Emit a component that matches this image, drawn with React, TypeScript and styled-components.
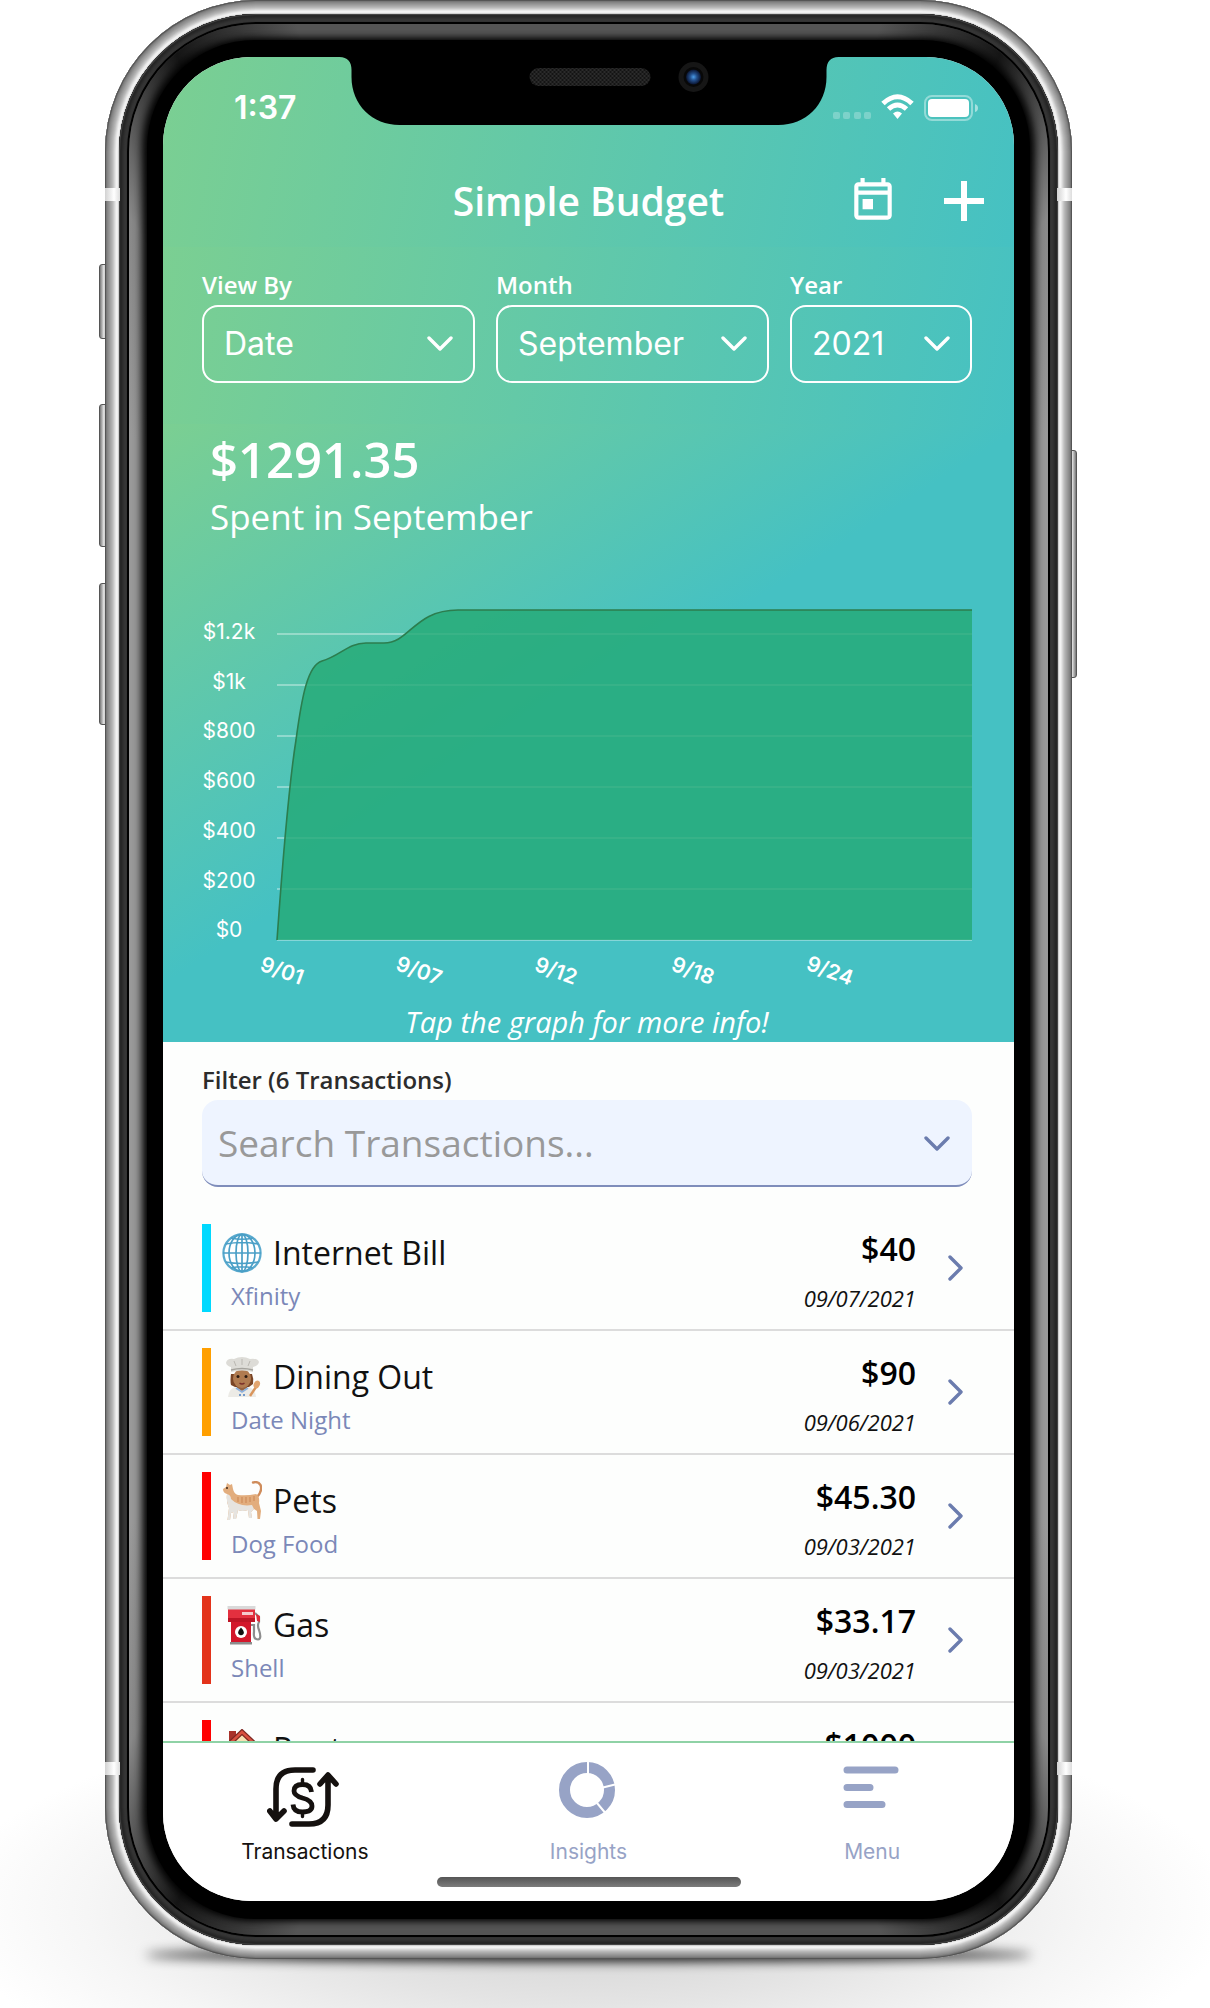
import React from "react";
import styled, { createGlobalStyle, css } from "styled-components";

const sans = '"Open Sans", "Noto Sans", sans-serif';
const system = 'Inter, "Liberation Sans", sans-serif';

const color = {
  green: "#7bcf92",
  teal: "#45c1c3",
  paper: "#fdfefd",
  slate: "#6b7cae",
  muted: "#97a3c6",
};

const GlobalStyle = createGlobalStyle`
  *, *::before, *::after { box-sizing: border-box; }
  body { margin: 0; background: #fff; font-family: ${sans}; }
  button, input, select { font: inherit; color: inherit; margin: 0; }
`;

/* ---------- device ---------- */

const rings = (shades: string[]) =>
  shades.map((shade, i) => `inset 0 0 0 ${i + 1}px ${shade}`).join(", ");

const silver = rings([
  "#555", "#777", "#858585", "#8f8f8f", "#999", "#a3a3a3", "#adadad",
  "#b8b8b8", "#c6c6c6", "#d6d6d6", "#e6e6e6", "#f2f2f2", "#eee", "#cfcfcf",
]);

const Page = styled.main`
  padding: 0 138px 49px 105px;
  overflow: hidden;
`;

const Stage = styled.div`
  position: relative;
`;

const Floor = styled.div`
  position: absolute;
  z-index: 0;
  left: -160px;
  right: -160px;
  bottom: -160px;
  height: 420px;
  background: radial-gradient(ellipse closest-side, #cfcfcf 0%, #e4e4e4 45%, #f6f6f6 78%, #fff 100%);
`;

const Contact = styled.div`
  position: absolute;
  z-index: 0;
  left: 40px;
  right: 40px;
  bottom: -2px;
  height: 12px;
  border-radius: 50%;
  background: #000;
  filter: blur(6px);
`;

const SideKey = styled.div<{ $top: number; $height: number; $right?: boolean }>`
  position: absolute;
  z-index: 0;
  ${(p) => (p.$right ? "right: -5px" : "left: -6px")};
  top: ${(p) => p.$top}px;
  height: ${(p) => p.$height}px;
  width: 14px;
  border-radius: 3px;
  border: 1px solid #555;
  background: linear-gradient(${(p) => (p.$right ? 270 : 90)}deg, #777, #e8e8e8 4px, #777 7px);
`;

const Shell = styled.div`
  position: relative;
  z-index: 1;
  display: flex;
  aspect-ratio: 967 / 1959;
  padding: 14px;
  border-radius: 152px;
  background: #222;
  box-shadow: ${silver};
`;

const Antenna = styled.div<{ $top: number; $right?: boolean }>`
  position: absolute;
  ${(p) => (p.$right ? "right: 0" : "left: 0")};
  top: ${(p) => p.$top}px;
  width: 15px;
  height: 13px;
  background: linear-gradient(90deg, #d2d2d2, #fff 60%, #ddd);
`;

const DarkRing = styled.div`
  flex: 1;
  display: flex;
  padding: 10px;
  border-radius: 138px;
  background: #2e2e2e;
  box-shadow: ${rings(["#444", "#262626", "#262626", "#2b2b2b", "#303030", "#343434", "#363636", "#333"])},
    inset 0 0 0 10px #000;
`;

const GlassRing = styled.div`
  flex: 1;
  display: flex;
  padding: 16px 18px;
  border-radius: 128px;
  overflow: hidden;
  background: conic-gradient(
    #555 0deg, #555 17deg, #161616 24deg, #888 31deg, #999 40deg,
    #999 140deg, #888 149deg, #161616 156deg, #555 163deg,
    #555 197deg, #161616 204deg, #888 211deg, #999 220deg,
    #999 320deg, #888 329deg, #161616 336deg, #555 343deg, #555 360deg
  );
`;

const Bezel = styled.div`
  flex: 1;
  display: flex;
  padding: 17px 16px 18px;
  border-radius: 108px;
  background: #000;
  box-shadow: -5px 0 9px #000, 5px 0 9px #000;
`;

const Screen = styled.div`
  position: relative;
  flex: 1;
  min-width: 0;
  display: flex;
  flex-direction: column;
  border-radius: 88px;
  overflow: hidden;
  background: ${color.paper};
`;

const NotchArt = styled.svg`
  position: absolute;
  top: -1px;
  left: 50%;
  transform: translateX(-50%);
  width: 499px;
  height: 69px;
`;

/* ---------- header ---------- */

const Header = styled.header`
  color: #fff;
  padding-bottom: 4px;
  background: linear-gradient(102deg, ${color.green} 0, ${color.teal} 880px);
`;

const StatusBar = styled.div`
  height: 102px;
  padding: 0 36px 0 71px;
  display: flex;
  align-items: center;
  justify-content: space-between;
  font: 600 32px/40px ${system};
`;

const StatusIcons = styled.svg`
  width: 146px;
  height: 28px;
`;

const NavBar = styled.div`
  height: 84px;
  padding: 0 30px;
  display: grid;
  grid-template-columns: 1fr auto 1fr;
  align-items: center;
`;

const Title = styled.h1`
  grid-column: 2;
  margin: 0;
  font: 600 39px/52px ${sans};
`;

const NavActions = styled.div`
  display: flex;
  justify-content: flex-end;
  align-items: center;
  gap: 46px;
`;

const IconButton = styled.button`
  display: flex;
  padding: 0;
  border: 0;
  background: none;
  cursor: pointer;
`;

const Filters = styled.section`
  display: flex;
  gap: 21px;
  padding: 22px 42px 41px 39px;
  color: #fff;
  background: linear-gradient(102deg, ${color.green} 0, ${color.teal} 880px);
`;

const Field = styled.div<{ $grow: number }>`
  flex: ${(p) => p.$grow} 1 0;
  min-width: 0;
  display: flex;
  flex-direction: column;
  gap: 4px;
`;

const labelText = css`
  font: 600 24px/32px ${sans};
`;

const FieldLabel = styled.label`
  ${labelText}
`;

const Control = styled.div`
  display: grid;
  align-items: center;
  > * { grid-area: 1 / 1; }
  > svg {
    justify-self: end;
    margin-right: 22px;
    pointer-events: none;
  }
`;

const Select = styled.select`
  appearance: none;
  width: 100%;
  height: 78px;
  padding: 0 20px;
  border: 2px solid #fff;
  border-radius: 16px;
  background: transparent;
  font: 400 32px/40px ${system};
  option { color: #222; }
`;

/* ---------- spending ---------- */

const Spending = styled.section`
  padding: 3px 42px 1px 39px;
  color: #fff;
  background: linear-gradient(147deg, ${color.green} 0, ${color.teal} 470px);
`;

const Total = styled.p`
  margin: 0 0 3px;
  padding-left: 8px;
  font: 600 49px/64px ${sans};
`;

const Caption = styled.p`
  margin: 0 0 60px;
  padding-left: 8px;
  font: 400 35px/46px ${sans};
`;

const Graph = styled.svg`
  display: block;
  width: 100%;
  height: auto;
  overflow: visible;
  font-family: ${system};
  font-size: 21px;
  fill: #fff;
  text-anchor: middle;
`;

const Hint = styled.p`
  margin: 18px 0 0;
  text-align: center;
  font: italic 400 29px/38px ${sans};
`;

/* ---------- transactions ---------- */

const Search = styled.section`
  display: flex;
  flex-direction: column;
  gap: 4px;
  padding: 22px 42px 20px 39px;
  color: #2c2c2c;
`;

const SearchInput = styled.input`
  width: 100%;
  height: 87px;
  padding: 0 60px 0 16px;
  border: 0;
  border-bottom: 2px solid #7f8dbb;
  border-radius: 16px;
  background: #eef4ff;
  font: 400 37px/48px ${sans};
  &::placeholder { color: #999; opacity: 1; }
`;

const List = styled.ul`
  flex: 1;
  min-height: 0;
  margin: 0;
  padding: 0;
  overflow: hidden;
  list-style: none;
`;

const Row = styled.li`
  display: flex;
  align-items: center;
  height: 124px;
  padding: 0 51px 0 39px;
  border-bottom: 2px solid #dcdcdc;
`;

const Stripe = styled.span<{ $color: string }>`
  width: 9px;
  height: 88px;
  background: ${(p) => p.$color};
`;

const Details = styled.div`
  flex: 1;
  height: 88px;
  display: flex;
  flex-direction: column;
  justify-content: flex-end;
  gap: 5px;
`;

const Name = styled.div`
  display: flex;
  align-items: center;
  gap: 11px;
  padding-left: 11px;
  color: #111;
  font: 400 32px/44px ${sans};
`;

const Payee = styled.div`
  padding-left: 20px;
  color: #7b88b8;
  font: 400 24px/32px ${sans};
`;

const Figures = styled.div`
  display: flex;
  flex-direction: column;
  gap: 11px;
  margin-right: 32px;
  padding-top: 4px;
  text-align: right;
  color: #111;
`;

const Amount = styled.span`
  color: #000;
  font: 600 32px/44px ${sans};
`;

const DateText = styled.time`
  font: italic 400 22px/32px ${sans};
`;

/* ---------- tabs ---------- */

const TabBar = styled.nav`
  display: grid;
  grid-template-columns: repeat(3, 1fr);
  padding-top: 17px;
  border-top: 2px solid #8fd2a6;
  background: #fff;
`;

const Tab = styled.button<{ $active?: boolean }>`
  display: flex;
  flex-direction: column;
  align-items: center;
  gap: 10px;
  padding: 0;
  border: 0;
  background: none;
  color: ${(p) => (p.$active ? "#15110f" : color.muted)};
  font: 400 21px/28px ${system};
  cursor: pointer;
`;

const HomeArea = styled.div`
  display: flex;
  justify-content: center;
  padding: 11px 0 14px;
  background: #fff;
`;

const HomeIndicator = styled.span`
  width: 304px;
  height: 10px;
  border-radius: 5px;
  background: linear-gradient(#555, #7c7c7c);
`;

/* ---------- icons ---------- */

const ChevronDown = ({ stroke = "#fff" }: { stroke?: string }) => (
  <svg width="26" height="16" viewBox="0 0 26 16" fill="none" stroke={stroke} strokeWidth="3.4" strokeLinecap="round" strokeLinejoin="round" aria-hidden="true">
    <path d="M2 2 L13 13 L24 2" />
  </svg>
);

const ChevronRight = () => (
  <svg width="15" height="26" viewBox="0 0 15 26" fill="none" stroke={color.slate} strokeWidth="3.4" strokeLinecap="round" strokeLinejoin="round" aria-hidden="true">
    <path d="M2 2 L13 13 L2 24" />
  </svg>
);

const Globe = () => (
  <svg width="40" height="40" viewBox="0 0 40 40" fill="none" stroke="#4a9fc6" strokeWidth="1.7" aria-hidden="true">
    <circle cx="20" cy="20" r="18.6" fill="#fff" stroke="#5aaace" strokeWidth="2.2" />
    <ellipse cx="20" cy="20" rx="13" ry="18.6" />
    <ellipse cx="20" cy="20" rx="6" ry="18.6" />
    <path d="M20 1 V39 M1 20 H39 M3.500 11 Q20 8 36.500 11 M3.500 29 Q20 32 36.500 29 M9 5 Q20 7.500 31 5 M9 35 Q20 32.500 31 35" />
  </svg>
);

const Cook = () => (
  <svg width="40" height="40" viewBox="0 0 40 40" aria-hidden="true">
    <path d="M9 17 Q8 24 9 28 L13 30 H27 L31 27 Q32 22 30 17 Z" fill="#7a4526" />
    <path d="M6 40 Q7 31 14 30 H26 Q33 31 34 40 Z" fill="#ecebe6" />
    <path d="M15 27 H25 V31 L20 34 L15 31 Z" fill="#96633f" />
    <ellipse cx="20" cy="21.500" rx="9" ry="9.500" fill="#b07b50" />
    <path d="M4 6 Q5 1 12 2 Q20 -2 28 2 Q36 1 37 5 Q36 9 31 10 V15 Q20 12 9 15 V10 Q5 9 4 6 Z" fill="#dddcd7" />
    <path d="M9 13 Q20 10 31 13" fill="none" stroke="#a5a39d" strokeWidth="1.500" />
    <path d="M12 4 L14 9 M20 2 V8 M28 4 L26 9" fill="none" stroke="#bab8b2" />
    <circle cx="16" cy="19.500" r="1.500" fill="#2b1a10" />
    <circle cx="24" cy="19.500" r="1.500" fill="#2b1a10" />
    <path d="M17.500 26 Q20 28 22.500 26" fill="none" stroke="#7a2f2a" strokeWidth="1.500" />
    <path d="M14 31 L20 35 L26 31" fill="none" stroke="#8db1dd" strokeWidth="1.600" />
    <circle cx="18" cy="38" r="1" fill="#4d7fc0" />
    <circle cx="22" cy="38" r="1" fill="#4d7fc0" />
    <path d="M28 39 L34 30" stroke="#d9955c" strokeWidth="2.400" />
    <ellipse cx="35" cy="27.500" rx="3" ry="4" fill="#e2a56f" transform="rotate(25 35 27)" />
  </svg>
);

const Cat = () => (
  <svg width="40" height="40" viewBox="0 0 40 40" aria-hidden="true">
    <path d="M34 17 Q41 10 38.500 4 Q36 0 31 1.500" fill="none" stroke="#cf8c5b" strokeWidth="2.400" strokeLinecap="round" />
    <path d="M1 8 L4 6 L5 2 L8 4 L10 3 L11 8 Q12 13 16 14 Q25 15 34 13 Q38 15 37 22 L39 30 L38 38 H35.500 L35 30 L32 28 L29 31 L30 37 H27 L26 29 Q20 31 16 29 L14 38 H11 L12 31 L9 32 L8 39 H5.500 L7 27 Q4 20 5 13 Q1 12 1 8 Z" fill="#e2ad7d" />
    <path d="M5 13 Q9 14 9 18 Q17 26 30 24 L32 28 L29 31 L30 37 H27 L26 29 Q20 31 16 29 L14 38 H11 L12 31 L9 32 L8 39 H5.500 L7 27 Q4 20 5 13 Z" fill="#e6e4e0" />
    <path d="M16 16 V21 M20 16 V22 M24 16 V22 M28 16 V21 M32 15 V20" stroke="#cf8e5c" strokeWidth="1.200" />
    <circle cx="5" cy="7" r="1" fill="#3a2617" />
  </svg>
);

const Pump = () => (
  <svg width="40" height="40" viewBox="0 0 40 40" aria-hidden="true">
    <path d="M33 8 L37 12 V17 Q35 20 37 25 Q40 34 36 34.500 Q31 34.500 32 27 V20 H29" fill="none" stroke="#8d8d8d" strokeWidth="2.200" />
    <path d="M34 9 L38 11 V17 L35 16 Z" fill="#df2a3a" />
    <rect x="9" y="17" width="20" height="21" fill="#d3172b" />
    <path d="M6 4 H33 V17 H6 Z" fill="#e3303f" />
    <path d="M6 13 H33 V17 H6 Z" fill="#bd1425" />
    <rect x="5.500" y="1" width="28" height="3.500" fill="#d9d9d9" />
    <rect x="20" y="7" width="11" height="3" fill="#f5c9cd" />
    <circle cx="19" cy="27" r="6" fill="#fff" />
    <path d="M19 22.500 Q23 27 21.500 29 Q19 31.500 16.500 29 Q15 27 19 22.500 Z" fill="#111" />
    <rect x="8" y="37" width="22" height="2.500" fill="#8c8c8c" />
  </svg>
);

const House = () => (
  <svg width="40" height="40" viewBox="0 0 40 40" aria-hidden="true">
    <path d="M9 16 L20 5 L31 16 V38 H9 Z" fill="#f7e2b4" />
    <path d="M7 2 H14 V12 L7 17 Z" fill="#a8322a" />
    <path d="M3 19 L20 3 L37 19" fill="none" stroke="#7c2822" strokeWidth="5" />
    <path d="M4 18 L20 3 L36 18" fill="none" stroke="#d9503f" strokeWidth="2.500" />
    <rect x="16" y="24" width="8" height="14" fill="#8a5a36" />
  </svg>
);

const TransferIcon = () => (
  <svg width="76" height="68" viewBox="0 0 76 68" fill="none" stroke="currentColor" strokeWidth="5.6" strokeLinecap="round" strokeLinejoin="round" aria-hidden="true">
    <path d="M46 10 H28 Q9 10 9 29 V58 M2.800 51 L9 59 L17 51" />
    <path d="M25 64 H42 Q61 64 61 45 V17 M53 24 L61 15 L69 24" />
    <path d="M44.500 32 Q44 24.500 35.500 24.500 Q27 24.500 27 31 Q27 35.500 35.500 38 Q45 40.500 45 46 Q45 52 35.500 52 Q26.500 52 26 44.500" strokeWidth="4.800" strokeLinecap="butt" />
    <path d="M35.500 19.500 V24 M35.500 52 V56.500" strokeWidth="3.400" />
  </svg>
);

const DonutIcon = () => (
  <svg width="76" height="68" viewBox="0 0 76 68" fill="none" aria-hidden="true">
    <circle cx="37" cy="30" r="22.500" stroke="currentColor" strokeWidth="11" />
    <path d="M38 0 V16 M51 28 L67 24 M47 43 L57 55" stroke="#fff" strokeWidth="2" />
  </svg>
);

const MenuIcon = () => (
  <svg width="76" height="68" viewBox="0 0 76 68" stroke="currentColor" strokeWidth="7" strokeLinecap="round" aria-hidden="true">
    <path d="M13 10 H61 M13 27.500 H36 M13 44.500 H48" />
  </svg>
);

const Notch = () => (
  <NotchArt viewBox="0 -1 499 69" aria-hidden="true">
    <defs>
      <pattern id="mesh" width="4" height="4" patternUnits="userSpaceOnUse">
        <rect width="4" height="4" fill="#2b2b2b" />
        <circle cx="1" cy="1" r="1" fill="#0c0c0c" />
        <circle cx="3" cy="3" r="1" fill="#0c0c0c" />
      </pattern>
      <radialGradient id="lens">
        <stop offset="0" stopColor="#4a9be8" />
        <stop offset=".45" stopColor="#234f8c" />
        <stop offset="1" stopColor="#0a1430" />
      </radialGradient>
    </defs>
    <path d="M0 -1 V0 C8 0 12 5 12 13 V20 C12 48 33 68 60 68 H439 C466 68 487 48 487 20 V13 C487 5 491 0 499 0 V-1 Z" fill="#000" />
    <rect x="190" y="11" width="121" height="18" rx="9" fill="url(#mesh)" />
    <circle cx="354" cy="20" r="15" fill="#161616" />
    <circle cx="354" cy="20" r="10" fill="#080808" />
    <circle cx="354" cy="20" r="7.500" fill="url(#lens)" />
  </NotchArt>
);

/* ---------- data ---------- */

const filters = [
  { id: "view", label: "View By", options: ["Date", "Category"], grow: 3 },
  { id: "month", label: "Month", options: ["September", "October"], grow: 3 },
  { id: "year", label: "Year", options: ["2021", "2020"], grow: 2 },
];

const transactions = [
  { name: "Internet Bill", payee: "Xfinity", amount: "$40", date: "09/07/2021", stripe: "#00d9ff", Icon: Globe },
  { name: "Dining Out", payee: "Date Night", amount: "$90", date: "09/06/2021", stripe: "#ff9f00", Icon: Cook },
  { name: "Pets", payee: "Dog Food", amount: "$45.30", date: "09/03/2021", stripe: "#ff0000", Icon: Cat },
  { name: "Gas", payee: "Shell", amount: "$33.17", date: "09/03/2021", stripe: "#e3331a", Icon: Pump },
  { name: "Rent", payee: "Landlord", amount: "$1000", date: "09/01/2021", stripe: "#ff0000", Icon: House },
];

const yTicks = ["$1.2k", "$1k", "$800", "$600", "$400", "$200", "$0"];
const xTicks = ["9/01", "9/07", "9/12", "9/18", "9/24"];
const curve =
  "M75 340 C80 270 86 190 94 140 C100 95 106 65 120 61 C138 56 146 43 164 43 H182 C208 43 212 10 256 10 H770";

const SpendGraph = () => (
  <Graph viewBox="0 0 770 385" role="img" aria-label="Cumulative spending in September">
    {yTicks.map((tick, i) => (
      <React.Fragment key={tick}>
        <rect x="75" y={33 + i * 51} width="695" height="2" fillOpacity=".35" />
        <text x="27" y={39 + i * 49.7}>{tick}</text>
      </React.Fragment>
    ))}
    <path d={`${curve} V340 Z`} fill="#23a974" fillOpacity=".8" />
    <path d={curve} fill="none" stroke="#2c7d4e" strokeWidth="1.600" />
    {xTicks.map((tick, i) => (
      <text key={tick} fontWeight="600" transform={`translate(${80 + i * 137} 371) rotate(20)`} y="7">
        {tick}
      </text>
    ))}
  </Graph>
);

/* ---------- app ---------- */

export default function App() {
  return (
    <Page>
      <GlobalStyle />
      <Stage>
        <Floor />
        <Contact />
        <SideKey $top={264} $height={75} />
        <SideKey $top={404} $height={143} />
        <SideKey $top={583} $height={142} />
        <SideKey $top={450} $height={228} $right />
        <Shell>
          <Antenna $top={188} />
          <Antenna $top={188} $right />
          <Antenna $top={1762} />
          <Antenna $top={1762} $right />
          <DarkRing>
            <GlassRing>
              <Bezel>
                <Screen>
                  <Header>
                    <StatusBar>
                      <span>1:37</span>
                      <StatusIcons viewBox="0 0 146 28" fill="#fff" aria-hidden="true">
                        <g opacity=".25">
                          <rect x="1" y="18" width="7" height="7" rx="2" />
                          <rect x="11" y="18" width="7" height="7" rx="2" />
                          <rect x="22" y="18" width="7" height="7" rx="2" />
                          <rect x="32" y="18" width="7" height="7" rx="2" />
                        </g>
                        <g fill="none" stroke="#fff" strokeWidth="5">
                          <path d="M51 9.500 Q65.500 -4 80 9.500" />
                          <path d="M56.500 15 Q65.500 7 74.500 15" />
                        </g>
                        <path d="M61 19.500 Q65.500 15.500 70 19.500 L65.500 25 Z" />
                        <rect x="93" y="2" width="47" height="24" rx="7" fill="none" stroke="#fff" strokeOpacity=".4" strokeWidth="2" />
                        <rect x="96" y="5" width="41" height="18" rx="4" />
                        <path d="M143 10 Q146 11 146 14 Q146 17 143 18 Z" opacity=".5" />
                      </StatusIcons>
                    </StatusBar>
                    <NavBar>
                      <Title>Simple Budget</Title>
                      <NavActions>
                        <IconButton type="button" aria-label="Today">
                          <svg width="50" height="50" viewBox="0 0 24 24" fill="#fff" aria-hidden="true">
                            <path d="M19 3h-1V1h-2v2H8V1H6v2H5c-1.110 0-1.990.9-1.990 2L3 19a2 2 0 0 0 2 2h14c1.100 0 2-.9 2-2V5c0-1.100-.9-2-2-2zm0 16H5V9h14v10zm0-12H5V5h14v2zM7 11h5v5H7z" />
                          </svg>
                        </IconButton>
                        <IconButton type="button" aria-label="Add transaction">
                          <svg width="40" height="40" viewBox="0 0 40 40" fill="#fff" aria-hidden="true">
                            <path d="M17 0 H23 V17 H40 V23 H23 V40 H17 V23 H0 V17 H17 Z" />
                          </svg>
                        </IconButton>
                      </NavActions>
                    </NavBar>
                  </Header>

                  <Filters>
                    {filters.map((f) => (
                      <Field key={f.id} $grow={f.grow}>
                        <FieldLabel htmlFor={f.id}>{f.label}</FieldLabel>
                        <Control>
                          <Select id={f.id}>
                            {f.options.map((o) => (
                              <option key={o}>{o}</option>
                            ))}
                          </Select>
                          <ChevronDown />
                        </Control>
                      </Field>
                    ))}
                  </Filters>

                  <Spending>
                    <Total>$1291.35</Total>
                    <Caption>Spent in September</Caption>
                    <SpendGraph />
                    <Hint>Tap the graph for more info!</Hint>
                  </Spending>

                  <Search>
                    <FieldLabel htmlFor="search">Filter (6 Transactions)</FieldLabel>
                    <Control>
                      <SearchInput id="search" type="text" placeholder="Search Transactions..." />
                      <ChevronDown stroke={color.slate} />
                    </Control>
                  </Search>

                  <List>
                    {transactions.map(({ name, payee, amount, date, stripe, Icon }) => (
                      <Row key={name}>
                        <Stripe $color={stripe} />
                        <Details>
                          <Name>
                            <Icon />
                            {name}
                          </Name>
                          <Payee>{payee}</Payee>
                        </Details>
                        <Figures>
                          <Amount>{amount}</Amount>
                          <DateText>{date}</DateText>
                        </Figures>
                        <ChevronRight />
                      </Row>
                    ))}
                  </List>

                  <TabBar>
                    <Tab type="button" $active aria-current="page">
                      <TransferIcon />
                      Transactions
                    </Tab>
                    <Tab type="button">
                      <DonutIcon />
                      Insights
                    </Tab>
                    <Tab type="button">
                      <MenuIcon />
                      Menu
                    </Tab>
                  </TabBar>
                  <HomeArea>
                    <HomeIndicator />
                  </HomeArea>
                  <Notch />
                </Screen>
              </Bezel>
            </GlassRing>
          </DarkRing>
        </Shell>
      </Stage>
    </Page>
  );
}
